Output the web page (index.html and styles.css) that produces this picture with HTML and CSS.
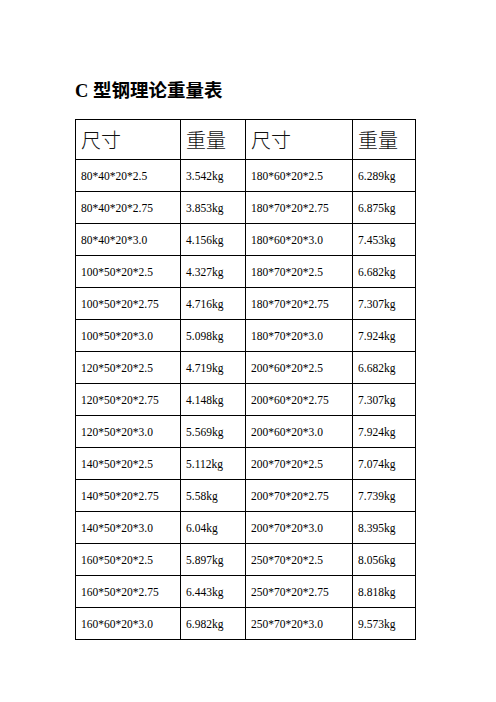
FILE: index.html
```html
<!DOCTYPE html>
<html lang="zh">
<head>
<meta charset="utf-8">
<title>C 型钢理论重量表</title>
<link rel="stylesheet" href="styles.css">
</head>
<body>
<div class="page">
  <h1 class="title">C 型钢理论重量表</h1>
  <table class="sheet">
    <colgroup>
      <col class="c1"><col class="c2"><col class="c3"><col class="c4">
    </colgroup>
    <tr class="head"><td>尺寸</td><td>重量</td><td>尺寸</td><td>重量</td></tr>
    <tr><td>80*40*20*2.5</td><td>3.542kg</td><td>180*60*20*2.5</td><td>6.289kg</td></tr>
    <tr><td>80*40*20*2.75</td><td>3.853kg</td><td>180*70*20*2.75</td><td>6.875kg</td></tr>
    <tr><td>80*40*20*3.0</td><td>4.156kg</td><td>180*60*20*3.0</td><td>7.453kg</td></tr>
    <tr><td>100*50*20*2.5</td><td>4.327kg</td><td>180*70*20*2.5</td><td>6.682kg</td></tr>
    <tr><td>100*50*20*2.75</td><td>4.716kg</td><td>180*70*20*2.75</td><td>7.307kg</td></tr>
    <tr><td>100*50*20*3.0</td><td>5.098kg</td><td>180*70*20*3.0</td><td>7.924kg</td></tr>
    <tr><td>120*50*20*2.5</td><td>4.719kg</td><td>200*60*20*2.5</td><td>6.682kg</td></tr>
    <tr><td>120*50*20*2.75</td><td>4.148kg</td><td>200*60*20*2.75</td><td>7.307kg</td></tr>
    <tr><td>120*50*20*3.0</td><td>5.569kg</td><td>200*60*20*3.0</td><td>7.924kg</td></tr>
    <tr><td>140*50*20*2.5</td><td>5.112kg</td><td>200*70*20*2.5</td><td>7.074kg</td></tr>
    <tr><td>140*50*20*2.75</td><td>5.58kg</td><td>200*70*20*2.75</td><td>7.739kg</td></tr>
    <tr><td>140*50*20*3.0</td><td>6.04kg</td><td>200*70*20*3.0</td><td>8.395kg</td></tr>
    <tr><td>160*50*20*2.5</td><td>5.897kg</td><td>250*70*20*2.5</td><td>8.056kg</td></tr>
    <tr><td>160*50*20*2.75</td><td>6.443kg</td><td>250*70*20*2.75</td><td>8.818kg</td></tr>
    <tr><td>160*60*20*3.0</td><td>6.982kg</td><td>250*70*20*3.0</td><td>9.573kg</td></tr>
  </table>
</div>
</body>
</html>
```

FILE: styles.css
```css
html, body {
  margin: 0;
  padding: 0;
  background: #ffffff;
}

.page {
  padding: 80px 0 0 75px;
  font-family: "Liberation Serif", "Noto Sans CJK SC", serif;
  color: #000;
}

.title {
  margin: 0 0 17px 0;
  font-size: 18.5px;
  line-height: 22px;
  font-weight: bold;
  font-family: "Liberation Serif", "Noto Sans CJK SC", serif;
}

.sheet {
  border-collapse: collapse;
  table-layout: fixed;
  width: 340px;
}

.c1 { width: 105px; }
.c2 { width: 65px; }
.c3 { width: 107px; }
.c4 { width: 63px; }

.sheet td {
  border: 1px solid #000;
  padding: 0 0 0 5px;
  height: 31px;
  font-size: 11.5px;
  line-height: 14px;
  vertical-align: middle;
  white-space: nowrap;
}

.sheet .head td {
  height: 39px;
  font-size: 20px;
  line-height: 24px;
  font-family: "Noto Sans CJK SC", sans-serif;
  font-weight: 300;
  color: #111;
}
```
